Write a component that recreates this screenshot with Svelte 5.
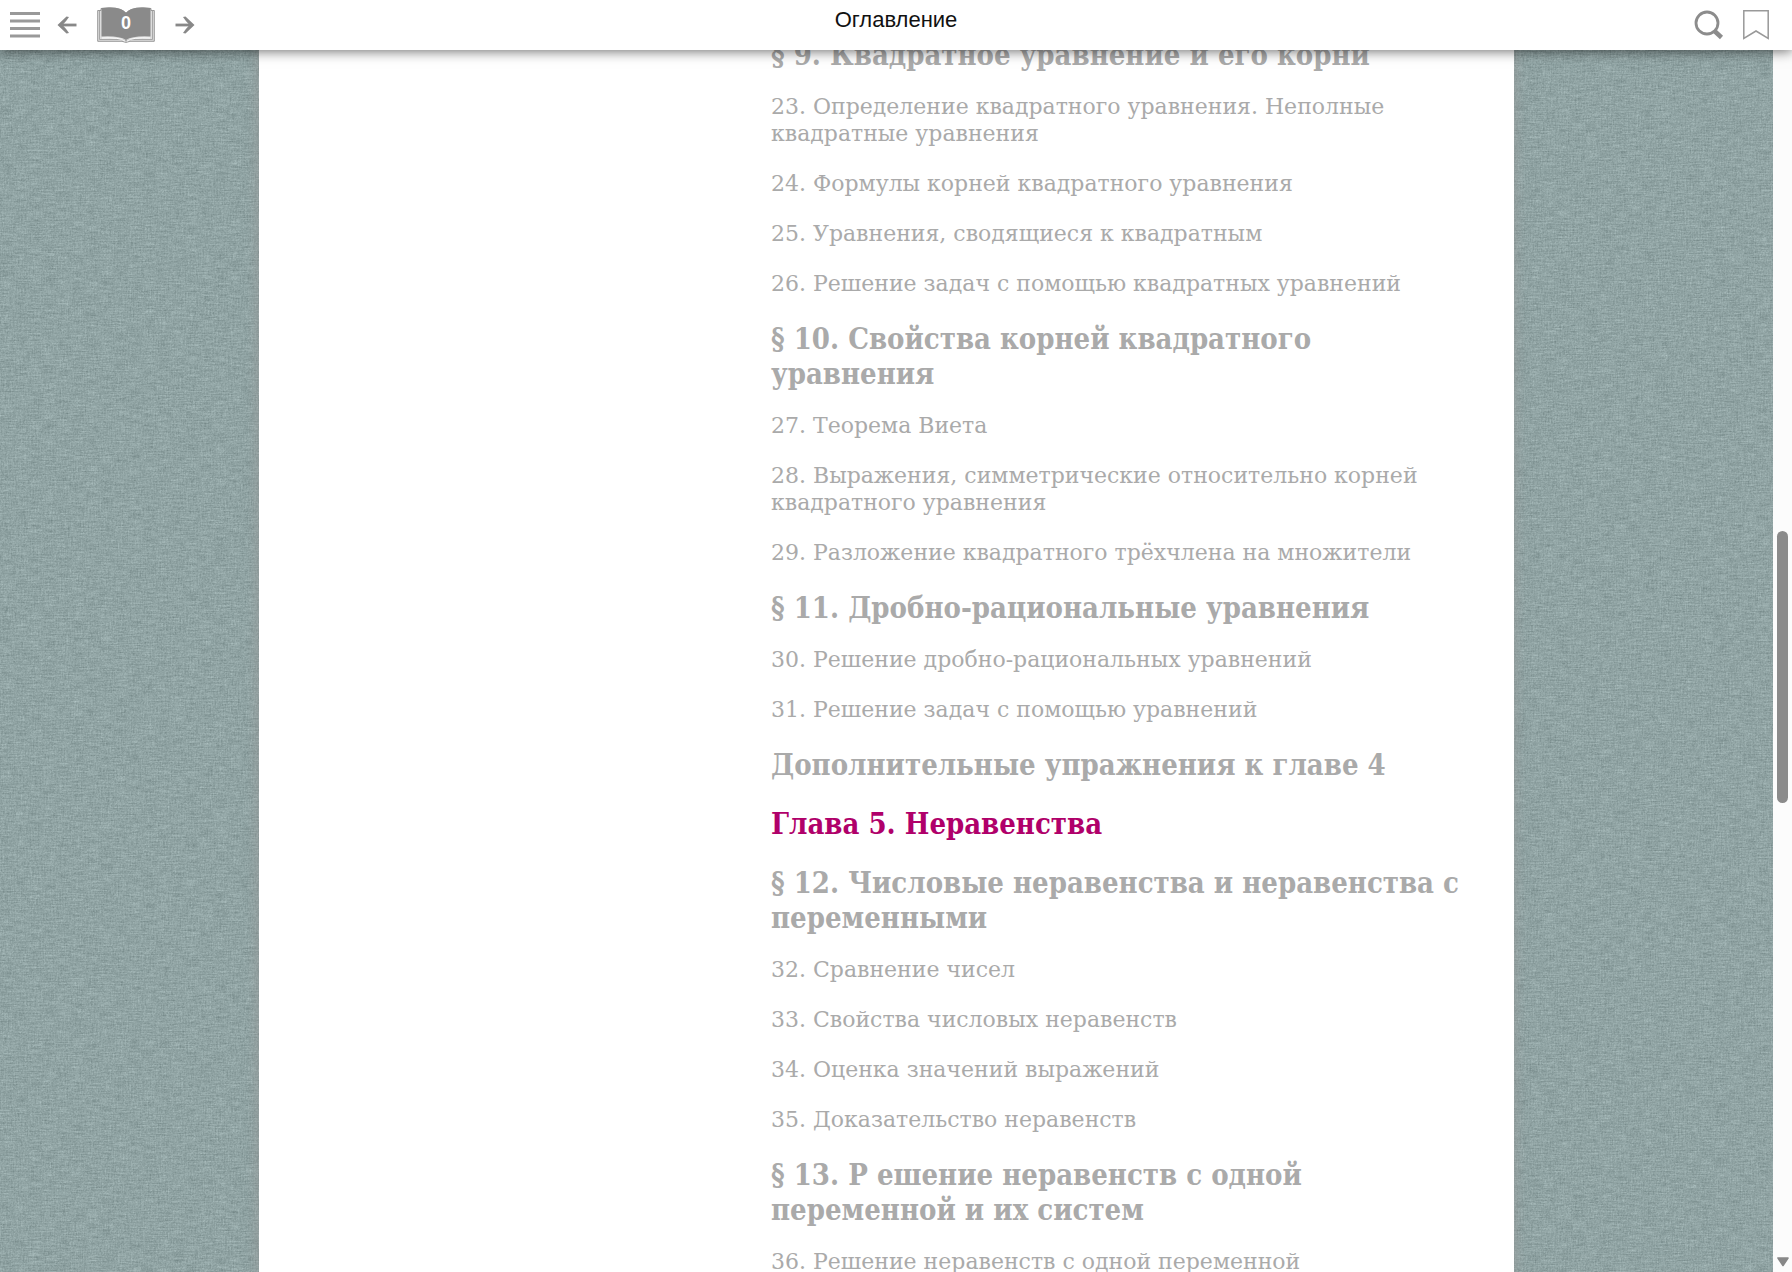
<script>
  const entries = [
    { kind: 'section', text: '§ 9. Квадратное уравнение и его корни' },
    { kind: 'topic', text: '23. Определение квадратного уравнения. Неполные квадратные уравнения' },
    { kind: 'topic', text: '24. Формулы корней квадратного уравнения' },
    { kind: 'topic', text: '25. Уравнения, сводящиеся к квадратным' },
    { kind: 'topic', text: '26. Решение задач с помощью квадратных уравнений' },
    { kind: 'section', text: '§ 10. Свойства корней квадратного уравнения' },
    { kind: 'topic', text: '27. Теорема Виета' },
    { kind: 'topic', text: '28. Выражения, симметрические относительно корней квадратного уравнения' },
    { kind: 'topic', text: '29. Разложение квадратного трёхчлена на множители' },
    { kind: 'section', text: '§ 11. Дробно-рациональные уравнения' },
    { kind: 'topic', text: '30. Решение дробно-рациональных уравнений' },
    { kind: 'topic', text: '31. Решение задач с помощью уравнений' },
    { kind: 'section', text: 'Дополнительные упражнения к главе 4' },
    { kind: 'chapter', text: 'Глава 5. Неравенства' },
    { kind: 'section', text: '§ 12. Числовые неравенства и неравенства с переменными' },
    { kind: 'topic', text: '32. Сравнение чисел' },
    { kind: 'topic', text: '33. Свойства числовых неравенств' },
    { kind: 'topic', text: '34. Оценка значений выражений' },
    { kind: 'topic', text: '35. Доказательство неравенств' },
    { kind: 'section', text: '§ 13. Р ешение неравенств с одной переменной и их систем' },
    { kind: 'topic', text: '36. Решение неравенств с одной переменной' }
  ];
  const scroll = { start: 39.4, size: 22.2 };
  const pageNumber = 0;
</script>

<div class="reader">
  <header>
    <nav class="tools" aria-label="Навигация">
      <button class="menu" aria-label="Меню">
        <svg width="30" height="28" viewBox="0 0 30 28"><path d="M0 2.500h30M0 10h30M0 17.500h30M0 25h30" stroke="#999" stroke-width="2.800" /></svg>
      </button>
      <button class="prev" aria-label="Назад">
        <svg width="20" height="20" viewBox="0 0 20 20"><path d="M19.500 10H4" stroke="#888" stroke-width="2.800" /><path d="M.5 10L9.500 1.500L12 2Q9.500 6 5.500 10Q9.500 14 12 18L9.500 18.500Z" fill="#888" /></svg>
      </button>
      <button class="book" aria-label="Страница">
        <svg width="58" height="36" viewBox="0 0 58 36">
          <path d="M.7 3.500H4V1.500Q22-1 29 6Q36-1 54 1.500V3.500H57.300V34.300H33Q29 36.500 25 34.300H.7Z" fill="#ddd" stroke="#999" stroke-width="1" />
          <path d="M2.500 3V32.500H24Q29 35 34 32.500H55.500V3" fill="none" stroke="#999" stroke-width=".8" />
          <path d="M4.500 1Q24-1 29 6Q34-1 53.500 1V29.500Q36 28.500 29 33Q22 28.500 4.500 29.500Z" fill="#8a8a8a" />
          <path d="M5 31Q22 30 28 34M53 31Q36 30 30 34" fill="none" stroke="#fff" stroke-width="1" />
        </svg>
        <span>{pageNumber}</span>
      </button>
      <button class="next" aria-label="Вперёд">
        <svg width="20" height="20" viewBox="0 0 20 20"><path d="M.5 10H16" stroke="#888" stroke-width="2.800" /><path d="M19.500 10L10.500 1.500L8 2Q10.500 6 14.500 10Q10.500 14 8 18L10.500 18.500Z" fill="#888" /></svg>
      </button>
    </nav>
    <h1>Оглавление</h1>
    <div class="actions">
      <button aria-label="Поиск">
        <svg width="30" height="30" viewBox="0 0 30 30"><circle cx="13" cy="13" r="11" fill="none" stroke="#8c8c8c" stroke-width="2.800" /><path d="M20.500 21L27.500 27.500" stroke="#8c8c8c" stroke-width="4.500" /></svg>
      </button>
      <button aria-label="Закладка">
        <svg width="26" height="30" viewBox="0 0 26 30"><path d="M.8.8H25.200V28.500L13 21L.8 28.500Z" fill="none" stroke="#999" stroke-width="1.500" /></svg>
      </button>
    </div>
  </header>

  <main>
    <div class="desk">
      <svg class="linen" aria-hidden="true">
        <filter id="weave" x="0" y="0" width="100%" height="100%" color-interpolation-filters="sRGB">
          <feTurbulence type="fractalNoise" baseFrequency="0.07 0.7" numOctaves="2" seed="4" />
          <feColorMatrix values=".5 0 0 0 .315  .5 0 0 0 .39  .5 0 0 0 .39  0 0 0 0 1" result="rows" />
          <feTurbulence type="fractalNoise" baseFrequency="0.7 0.07" numOctaves="2" seed="9" />
          <feColorMatrix values=".3 0 0 0 .415  .3 0 0 0 .49  .3 0 0 0 .49  0 0 0 0 1" result="cols" />
          <feTurbulence type="fractalNoise" baseFrequency="0.6" numOctaves="2" seed="2" />
          <feColorMatrix values=".4 0 0 0 .365  .4 0 0 0 .44  .4 0 0 0 .44  0 0 0 0 1" result="grain" />
          <feComposite in="rows" in2="cols" operator="arithmetic" k2=".5" k3=".5" result="threads" />
          <feComposite in="threads" in2="grain" operator="arithmetic" k2=".6" k3=".4" />
        </filter>
        <rect width="100%" height="100%" filter="url(#weave)" />
      </svg>
      <article>
        <ul>
          {#each entries as entry}
            <li class={entry.kind}><a href="#top">{entry.text}</a></li>
          {/each}
        </ul>
      </article>
    </div>
    <div class="scrollbar" aria-hidden="true">
      <div class="thumb" style:top="{scroll.start}%" style:height="{scroll.size}%"></div>
      <svg width="14" height="10" viewBox="0 0 14 10"><path d="M2 1H12L7 8.500Z" fill="#888" stroke="#888" stroke-width="1.600" stroke-linejoin="round" /></svg>
    </div>
  </main>
</div>

<style>
  :global(body) {
    margin: 0;
    background: #fff;
  }
  .reader {
    display: flex;
    flex-direction: column;
    height: 100vh;
    overflow: hidden;
  }
  header {
    position: relative;
    z-index: 1;
    display: grid;
    grid-template-columns: 1fr auto 1fr;
    flex: none;
    height: 50px;
    background: #fff;
    box-shadow: 0 1px 12px rgba(0, 0, 0, 0.6);
  }
  button {
    display: block;
    padding: 0;
    border: 0;
    background: none;
    cursor: pointer;
  }
  svg {
    display: block;
  }
  .tools {
    display: flex;
    align-items: center;
    padding-left: 10px;
    gap: 20px;
  }
  .prev {
    margin-left: -3px;
  }
  .book {
    position: relative;
  }
  .book span {
    position: absolute;
    inset: 0;
    font: bold 18px/32px "Liberation Sans", Arial, sans-serif;
    color: #fff;
    text-align: center;
  }
  h1 {
    margin: 0;
    font: 22px/40px "Liberation Sans", Arial, sans-serif;
    color: #111;
  }
  .actions {
    display: flex;
    align-items: center;
    justify-content: flex-end;
    gap: 19px;
    padding-right: 23px;
  }
  main {
    display: flex;
    flex: 1;
    min-height: 0;
  }
  .desk {
    position: relative;
    flex: 1;
    overflow: hidden;
    background: #8ea3a2;
  }
  .linen {
    position: absolute;
    width: 100%;
    height: 100%;
  }
  article {
    position: relative;
    box-sizing: border-box;
    max-width: 1255px;
    min-height: 100%;
    margin: 0 auto;
    padding-left: 512px;
    padding-right: 48px;
    background: #fff;
    box-shadow: 0 0 12px rgba(150, 150, 150, 0.8);
  }
  ul {
    display: flow-root;
    margin: -12px 0 0;
    padding: 0;
    list-style: none;
    font-family: "DejaVu Serif", serif;
  }
  li {
    color: #aaa;
  }
  li + li {
    margin-top: 24px;
  }
  a {
    color: inherit;
    text-decoration: none;
  }
  .topic {
    font-size: 22px;
    line-height: 27px;
  }
  .section,
  .chapter {
    font-family: "DejaVu Serif Condensed", "DejaVu Serif", serif;
    font-size: 29px;
    line-height: 35px;
    font-weight: bold;
  }
  .chapter {
    color: #b0006a;
  }
  .topic + .topic {
    margin-top: 23px;
  }
  .section + .topic {
    margin-top: 20px;
  }
  .topic + .section {
    margin-top: 25px;
  }
  .scrollbar {
    position: relative;
    display: flex;
    align-items: flex-end;
    justify-content: center;
    box-sizing: border-box;
    width: 19px;
    padding-bottom: 5px;
    background: #fcfcfc;
  }
  .thumb {
    position: absolute;
    left: 4px;
    width: 11px;
    border-radius: 6px;
    background: #8b8b8b;
  }
</style>
